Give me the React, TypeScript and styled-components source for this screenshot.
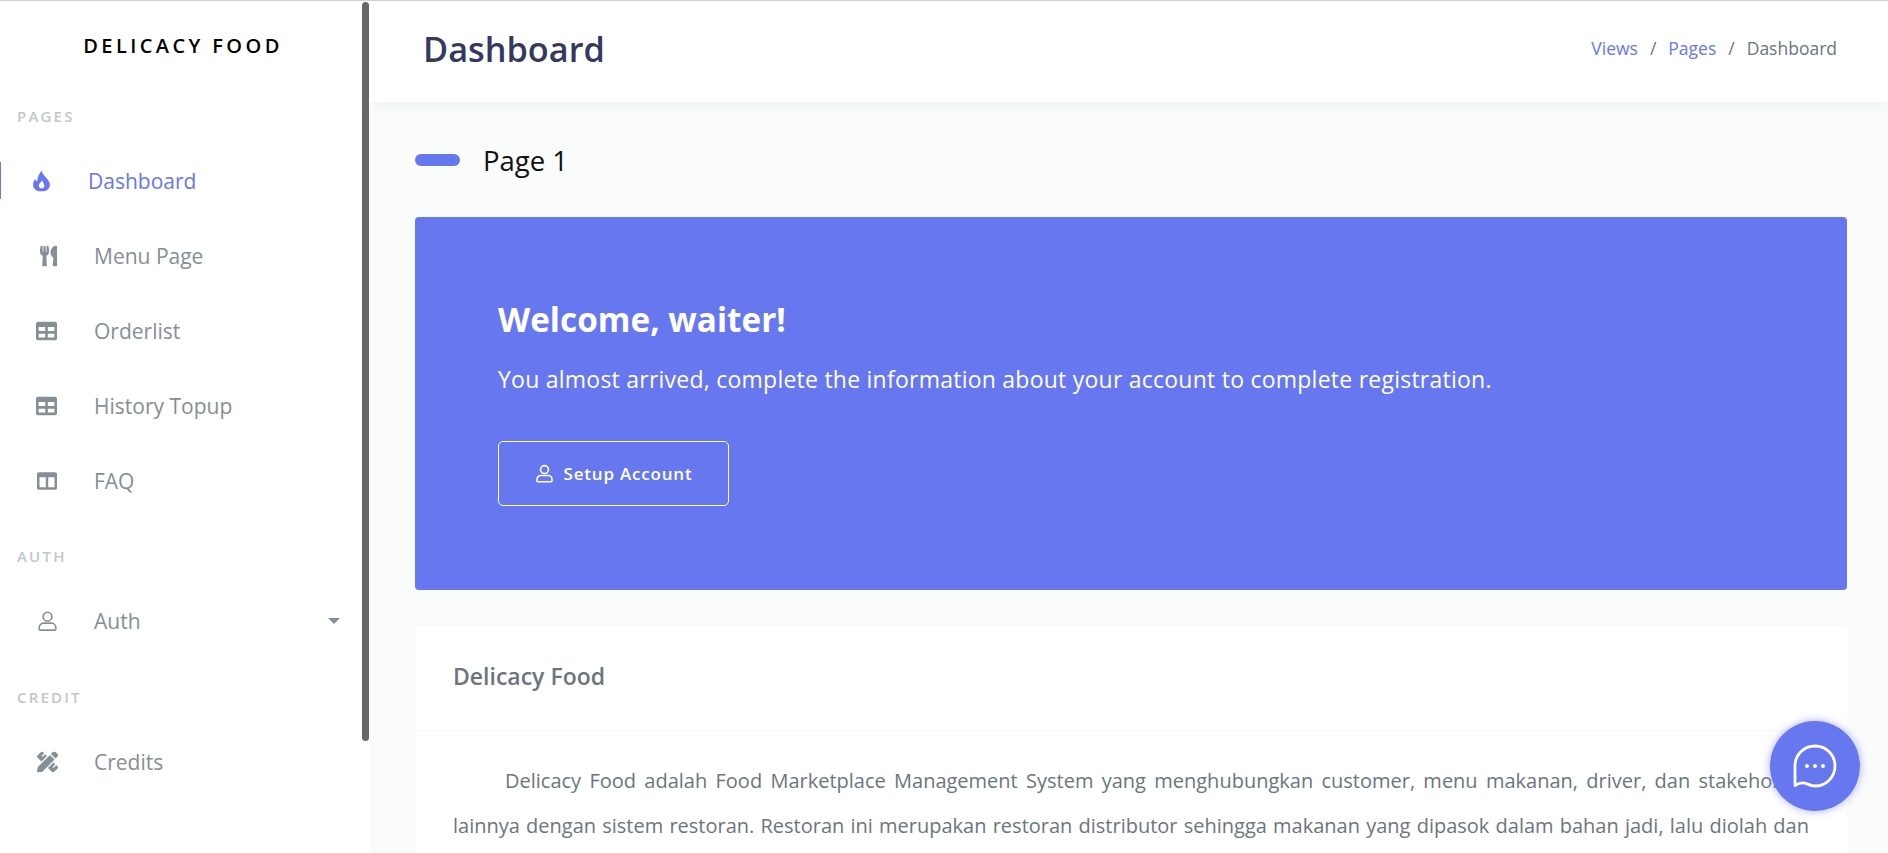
import React from 'react';
import styled, { createGlobalStyle } from 'styled-components';
import { FaUtensils, FaTable, FaColumns, FaPencilRuler } from 'react-icons/fa';

const Global = createGlobalStyle`
  html, body { margin: 0; padding: 0; height: 100%; overflow: hidden; background: #fafbfb; }
  body { font-family: "Open Sans", "Noto Sans", sans-serif; }
  * { box-sizing: border-box; }
`;

const Page = styled.div`
  display: flex;
  height: 853px;
  overflow: hidden;
  border-top: 1px solid #cfcfcf;
`;

const Sidebar = styled.aside`
  position: relative;
  width: 370px;
  flex: none;
  background: #fff;
  padding-top: 1px;
`;

const ScrollThumb = styled.div`
  position: absolute;
  top: 1px;
  left: 362px;
  width: 7px;
  height: 739px;
  border-radius: 4px;
  background: #686868;
`;

const Brand = styled.div`
  height: 78px;
  display: flex;
  align-items: center;
  justify-content: center;
  padding: 9px 4px 0 0;
  font-size: 20px;
  font-weight: 600;
  letter-spacing: 3.4px;
  color: #000;
`;

const Section = styled.div<{ $top: number }>`
  margin-top: ${p => p.$top}px;
  height: 20px;
  line-height: 20px;
  padding-left: 17px;
  font-size: 15px;
  font-weight: 600;
  letter-spacing: 2.2px;
  color: #c2c7cc;
`;

const Item = styled.div<{ $active?: boolean; $gap?: number }>`
  position: relative;
  display: flex;
  align-items: center;
  height: 75px;
  margin-top: ${p => p.$gap ?? 0}px;
  font-size: 21px;
  color: ${p => (p.$active ? '#6777ef' : '#868e96')};
  padding-left: ${p => (p.$active ? '88px' : '94px')};
`;

const ActiveMark = styled.span`
  position: absolute;
  left: 0;
  top: 19px;
  width: 1px;
  height: 37px;
  background: #6777ef;
`;

const IconSlot = styled.span<{ $left: number; $size: number }>`
  position: absolute;
  left: ${p => p.$left}px;
  top: 50%;
  transform: translateY(-50%);
  display: flex;
  font-size: ${p => p.$size}px;
`;

const Caret = styled.span`
  position: absolute;
  left: 328px;
  top: 35px;
  width: 0;
  height: 0;
  border-left: 6px solid transparent;
  border-right: 6px solid transparent;
  border-top: 6px solid #868e96;
`;

const Main = styled.main`
  flex: 1;
  min-width: 0;
`;

const Header = styled.header`
  height: 101px;
  background: #fff;
  display: flex;
  align-items: center;
  justify-content: space-between;
  padding: 0 51px 0 53px;
  box-shadow: 0 4px 16px rgba(0, 0, 0, 0.035);
  position: relative;
`;

const Title = styled.h1`
  margin: 0 0 6px;
  font-size: 34.3px;
  font-weight: 600;
  color: #34395e;
`;

const Crumbs = styled.nav`
  display: flex;
  gap: 12px;
  font-size: 17.5px;
  margin-bottom: 7px;
  color: #6c757d;
`;

const CrumbLink = styled.span`
  color: #6777ef;
`;

const Content = styled.div`
  padding: 0 41px 0 45px;
`;

const PageHead = styled.div`
  display: flex;
  align-items: center;
  height: 115px;
  gap: 23px;
`;

const Pill = styled.span`
  width: 45px;
  height: 12px;
  border-radius: 6px;
  background: #6777ef;
`;

const PageName = styled.span`
  position: relative;
  top: 1px;
  font-size: 27.5px;
  color: #111;
`;

const Banner = styled.section`
  height: 373px;
  background: #6777ef;
  border-radius: 4px;
  padding: 80px 83px 0;
  color: #fff;
`;

const Welcome = styled.h2`
  margin: 0;
  font-size: 33.3px;
  line-height: 44px;
  font-weight: 700;
`;

const Lead = styled.p`
  margin: 20px 0 0;
  font-size: 23px;
  line-height: 36px;
  letter-spacing: 0.24px;
`;

const SetupButton = styled.button`
  margin-top: 44px;
  display: flex;
  align-items: center;
  justify-content: center;
  gap: 10px;
  width: 231px;
  height: 65px;
  background: transparent;
  border: 1px solid #fff;
  border-radius: 5px;
  color: #fff;
  font-family: inherit;
  font-size: 17px;
  font-weight: 600;
  letter-spacing: 0.8px;
`;

const Card = styled.section`
  margin-top: 36px;
  min-height: 300px;
  background: #fff;
  border-radius: 4px;
`;

const CardHead = styled.div`
  height: 105px;
  padding: 0 38px 5px;
  display: flex;
  align-items: center;
  border-bottom: 1px solid #f6f7f7;
  font-size: 23px;
  font-weight: 600;
  color: #6c757d;
`;

const CardBody = styled.div`
  padding: 28px 38px 0;
  font-size: 20px;
  line-height: 44.5px;
  color: #6c757d;
  text-align: justify;
  text-align-last: justify;
`;

const Indent = styled.span`
  padding-left: 52px;
`;

const ChatFab = styled.div`
  position: absolute;
  left: 1770px;
  top: 721px;
  width: 90px;
  height: 90px;
  border-radius: 50%;
  background: #6777ef;
  box-shadow: 0 0 8px rgba(103, 119, 239, 0.6);
  display: flex;
  align-items: center;
  justify-content: center;
`;

const FlameIcon = () => (
  <svg width="17" height="21" viewBox="0 0 16 20" fill="#6777ef" fillRule="evenodd">
    <path d="M8 0c.5 3 2.500 4.500 4.500 7 1.500 2 3.500 4 3.500 6.500 0 3.800-3.500 6.500-8 6.500s-8-2.700-8-6.500c0-2.500 1-4 2-5.500.5 1 1 2 2 2.500C3.800 6.500 6 3 8 0zM8.500 9c-.3 2-3 3-3 5.500C5.500 16 6.600 17 8 17s2.700-1 2.700-2.500c0-2-1.700-3.300-2.200-5.500z" />
  </svg>
);

const UserIcon = ({ size, color, width }: { size: number; color: string; width: number }) => (
  <svg width={size} height={size} viewBox="0 0 24 24" fill="none" stroke={color} strokeWidth={width} strokeLinejoin="round">
    <circle cx="12" cy="7" r="5" />
    <path d="M7.5 14.5h9a5 5 0 0 1 5 5V21a1.5 1.5 0 0 1-1.5 1.5H4A1.5 1.5 0 0 1 2.500 21v-1.500a5 5 0 0 1 5-5z" />
  </svg>
);

const ChatIcon = () => (
  <svg width="44" height="44" viewBox="0 0 44 44" fill="none">
    <path d="M2 41.500V22a20 20 0 1 1 20 20c-3.500 0-6-1.200-8.500-2.300-3.500-1.500-7-1.200-11.500 1.800z" stroke="#fff" strokeWidth="2.800" strokeLinejoin="round" />
    <circle cx="14" cy="22" r="2" fill="#fff" />
    <circle cx="22" cy="22" r="2" fill="#fff" />
    <circle cx="30" cy="22" r="2" fill="#fff" />
  </svg>
);

export default function App() {
  return (
    <>
      <Global />
      <Page>
        <Sidebar>
          <Brand>DELICACY FOOD</Brand>
          <Section $top={26}>PAGES</Section>
          <Item $active $gap={17}>
            <ActiveMark />
            <IconSlot $left={33} $size={20}><FlameIcon /></IconSlot>
            Dashboard
          </Item>
          <Item>
            <IconSlot $left={38} $size={21}><FaUtensils /></IconSlot>
            Menu Page
          </Item>
          <Item>
            <IconSlot $left={36} $size={21}><FaTable /></IconSlot>
            Orderlist
          </Item>
          <Item>
            <IconSlot $left={36} $size={21}><FaTable /></IconSlot>
            History Topup
          </Item>
          <Item>
            <IconSlot $left={37} $size={20}><FaColumns /></IconSlot>
            FAQ
          </Item>
          <Section $top={28}>AUTH</Section>
          <Item $gap={17}>
            <IconSlot $left={37} $size={21}><UserIcon size={21} color="#868e96" width={1.9} /></IconSlot>
            Auth
            <Caret />
          </Item>
          <Section $top={29}>CREDIT</Section>
          <Item $gap={17}>
            <IconSlot $left={37} $size={21}><FaPencilRuler /></IconSlot>
            Credits
          </Item>
          <ScrollThumb />
        </Sidebar>
        <Main>
          <Header>
            <Title>Dashboard</Title>
            <Crumbs>
              <CrumbLink>Views</CrumbLink>
              <span>/</span>
              <CrumbLink>Pages</CrumbLink>
              <span>/</span>
              <span>Dashboard</span>
            </Crumbs>
          </Header>
          <Content>
            <PageHead>
              <Pill />
              <PageName>Page 1</PageName>
            </PageHead>
            <Banner>
              <Welcome>Welcome, waiter!</Welcome>
              <Lead>You almost arrived, complete the information about your account to complete registration.</Lead>
              <SetupButton>
                <UserIcon size={19} color="#fff" width={2} />
                Setup Account
              </SetupButton>
            </Banner>
            <Card>
              <CardHead>Delicacy Food</CardHead>
              <CardBody>
                <Indent />Delicacy Food adalah Food Marketplace Management System yang menghubungkan customer, menu makanan, driver, dan stakeholder<br />
                lainnya dengan sistem restoran. Restoran ini merupakan restoran distributor sehingga makanan yang dipasok dalam bahan jadi, lalu diolah dan
              </CardBody>
            </Card>
          </Content>
        </Main>
        <ChatFab><ChatIcon /></ChatFab>
      </Page>
    </>
  );
}
